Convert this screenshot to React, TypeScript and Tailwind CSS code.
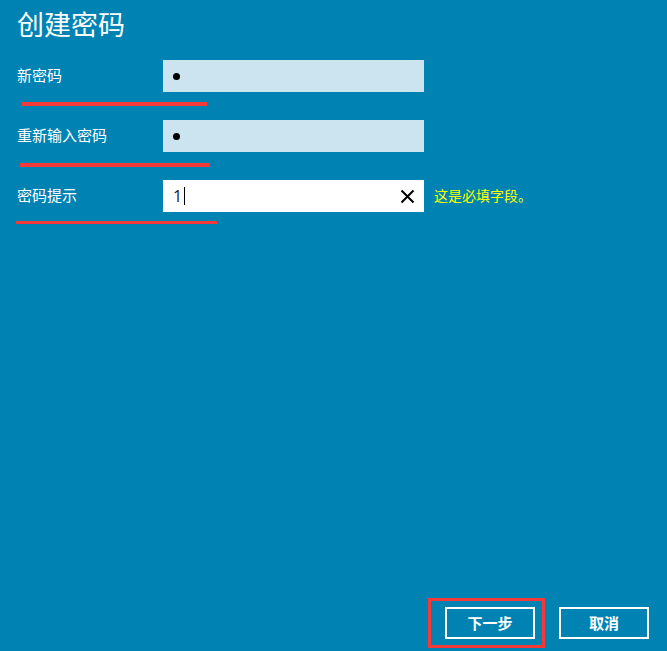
import React from "react";

const font = { fontFamily: '"Noto Sans CJK SC", "Noto Sans", sans-serif' };

function Row({ label, children, extra }: { label: string; children: React.ReactNode; extra?: React.ReactNode }) {
  return (
    <div className="flex items-center h-8">
      <div className="w-[146px] text-[15px] text-white leading-none -mt-[3px]">{label}</div>
      {children}
      {extra}
    </div>
  );
}

function PasswordBox() {
  return (
    <div className="w-[261px] h-8 bg-[#cce4ef] flex items-center pl-[10px]">
      <div className="w-[7px] h-[7px] rounded-full bg-black" />
    </div>
  );
}

export default function App() {
  return (
    <div className="min-h-[651px] h-[651px] bg-[#0083b3] flex flex-col px-[17px] overflow-hidden" style={font}>
      <h1 className="text-[27px] text-white leading-none pt-[10px] h-[60px] font-normal">创建密码</h1>

      <Row label="新密码">
        <PasswordBox />
      </Row>
      <div className="ml-[5px] w-[185px] h-[4px] bg-[#f53838] mt-[10px]" />

      <div className="mt-[14px]">
        <Row label="重新输入密码">
          <PasswordBox />
        </Row>
      </div>
      <div className="ml-[3px] w-[190px] h-[4px] bg-[#f53838] mt-[11px]" />

      <div className="mt-[13px]">
        <Row
          label="密码提示"
          extra={<span className="ml-[10px] text-[14px] text-[#ffff00] leading-none -mt-[2px]">这是必填字段。</span>}
        >
          <div className="w-[261px] h-8 bg-white flex items-center pl-[10px] pr-[9px]">
            <span className="text-[16px] text-[#1a1a1a] leading-none" style={{ fontFamily: '"Open Sans", sans-serif' }}>1</span>
            <span className="w-px h-[18px] bg-black ml-[2px]" />
            <span className="flex-1" />
            <svg width="15" height="15" viewBox="0 0 15 15">
              <path d="M1.5 1.5 L13.5 13.5 M13.5 1.5 L1.5 13.5" stroke="#000" strokeWidth="2" />
            </svg>
          </div>
        </Row>
      </div>
      <div className="-ml-[1px] w-[201px] h-[3px] bg-[#f53838] mt-[9px]" />

      <div className="mt-auto mb-[3px] flex justify-end items-center mr-px">
        <div className="border-[3px] border-[#f53838] w-[117px] h-[50px] flex items-center pl-[14px] pb-px">
          <button className="w-[90px] h-[32px] border-2 border-white text-white text-[15px] font-bold leading-none">
            下一步
          </button>
        </div>
        <button className="ml-[14px] w-[90px] h-[32px] border-2 border-white text-white text-[15px] font-bold leading-none -mt-px">
          取消
        </button>
      </div>
    </div>
  );
}
